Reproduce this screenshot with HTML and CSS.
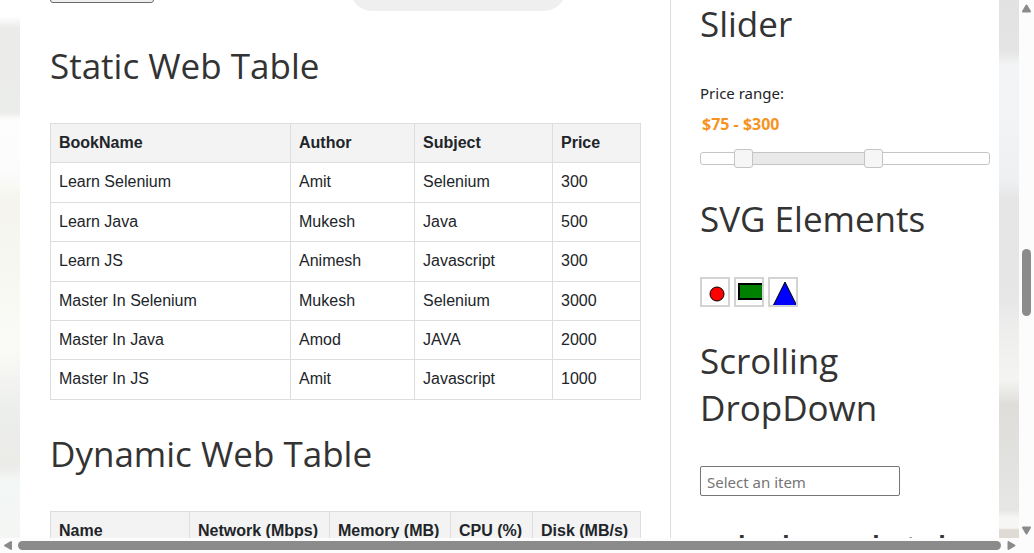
FILE: index.html
```
<!DOCTYPE html>
<html lang="en">
<head>
<meta charset="utf-8">
<title>Web Table</title>
<link rel="stylesheet" href="styles.css">
</head>
<body>
<div class="window">
  <div class="viewport">
    <div class="page">
      <main class="main">
        <div class="buttons"><button class="btn" type="button"></button><button class="pill" type="button"></button></div>
        <h2 class="title">Static Web Table</h2>
        <table class="table">
          <colgroup><col class="book"><col class="author"><col class="subject"><col class="price"></colgroup>
          <tr><th>BookName</th><th>Author</th><th>Subject</th><th>Price</th></tr>
          <tr><td>Learn Selenium</td><td>Amit</td><td>Selenium</td><td>300</td></tr>
          <tr><td>Learn Java</td><td>Mukesh</td><td>Java</td><td>500</td></tr>
          <tr><td>Learn JS</td><td>Animesh</td><td>Javascript</td><td>300</td></tr>
          <tr><td>Master In Selenium</td><td>Mukesh</td><td>Selenium</td><td>3000</td></tr>
          <tr><td>Master In Java</td><td>Amod</td><td>JAVA</td><td>2000</td></tr>
          <tr><td>Master In JS</td><td>Amit</td><td>Javascript</td><td>1000</td></tr>
        </table>
        <h2 class="title">Dynamic Web Table</h2>
        <table class="table">
          <colgroup><col class="name"><col class="network"><col class="memory"><col class="cpu"><col class="disk"></colgroup>
          <tr><th>Name</th><th>Network (Mbps)</th><th>Memory (MB)</th><th>CPU (%)</th><th>Disk (MB/s)</th></tr>
        </table>
      </main>
      <aside class="side">
        <h2 class="title">Slider</h2>
        <label class="range-label" for="amount">Price range:</label>
        <input class="amount" id="amount" type="text" readonly value="$75 - $300">
        <div class="slider">
          <div class="slider-range"></div>
          <input class="slider-input" type="range" min="0" max="500" value="75" aria-labelledby="amount">
          <input class="slider-input" type="range" min="0" max="500" value="300" aria-labelledby="amount">
        </div>
        <h2 class="title">SVG Elements</h2>
        <div class="shapes">
          <svg class="shape" viewBox="0 0 26 26"><circle cx="15" cy="15" r="7" fill="red" stroke="black"/></svg>
          <svg class="shape" viewBox="0 0 26 26"><rect x="3" y="5" width="40" height="15" fill="green" stroke="black" stroke-width="2"/></svg>
          <svg class="shape" viewBox="0 0 26 26"><path d="M15 3 L27 27 H3 Z" fill="blue" stroke="black"/></svg>
        </div>
        <h2 class="title">Scrolling DropDown</h2>
        <input class="combo" type="text" placeholder="Select an item" aria-label="Select an item">
        <h3 class="subtitle">and only an selected</h3>
      </aside>
    </div>
  </div>
  <div class="bar bar-y">
    <svg class="arrow" viewBox="0 0 15 15"><path d="M7.500 5.500 L11 11.500 H4 Z"/></svg>
    <div class="track-y"><div class="thumb-y"></div></div>
    <svg class="arrow" viewBox="0 0 15 15"><path d="M4 4.500 H11 L7.500 10.500 Z"/></svg>
  </div>
  <div class="bar bar-x">
    <svg class="arrow" viewBox="0 0 15 15"><path d="M5 7.500 L11 4 V11 Z"/></svg>
    <div class="thumb-x"></div>
    <svg class="arrow" viewBox="0 0 15 15"><path d="M4.500 4 V11 L10.500 7.500 Z"/></svg>
  </div>
</div>
</body>
</html>
```
FILE: styles.css
```
* { box-sizing: border-box; }
body { margin: 0; color: #212529; font: 15px/24px "Noto Sans", sans-serif; }
.window { display: grid; grid-template: minmax(0, 1fr) 15px / minmax(0, 1fr) 15px; height: 100vh; overflow: hidden; }
.viewport {
  overflow: hidden;
  padding: 0 20px;
  background:
    linear-gradient(#fff 16px, #ebebea 28px, #ebedea 112px, #fdfdfd 120px, #fcfcfd 170px, #f5f5ee 200px, #fafaf7 350px, #eceeeb 410px, #ebebe8 465px, #f3f7f5 480px, #f4f6f4 100%) left / 50% 100% no-repeat,
    linear-gradient(#e2e2e2, #e4e4e4 50px, #f3f4f5 65px, #f2f3f4 120px, #eef0f1 180px, #e5e5e6 200px, #e7e7e7 300px, #eeeeed 330px, #f4f4f2 380px, #deddda 405px, #e6e6e5 510px, #f6f7f5 518px, #f6f7f5 528px, #dfdad4 530px);
}
.page { display: grid; grid-template-columns: minmax(0, 650fr) minmax(0, 329fr); background: #fff; min-height: 100%; }
.main { padding: 0 30px; }
.side { padding: 0 9px 0 29px; border-left: 1px solid #ddd; }
.title { margin: 0 0 34px; font-family: "Open Sans", sans-serif; font-size: 35px; line-height: 47px; font-weight: 400; color: #333; }
.subtitle { margin: 31px 0 20px; font: 700 24px/34px "Open Sans", sans-serif; color: #333; white-space: nowrap; }

.buttons { display: flex; align-items: flex-start; gap: 196px; height: 42px; }
.btn { width: 104px; height: 30px; margin-top: -27px; border: 1px solid #6b6b6b; border-radius: 3px; background: #efefef; }
.pill { width: 216px; height: 44px; margin-top: -33px; border: 0; border-radius: 22px; background: #efefef; }

.table { width: 100%; margin-bottom: 30px; table-layout: fixed; border-collapse: collapse; font: 16px/1.4 "Liberation Sans", Arial, sans-serif; }
.table th, .table td { padding: 8px; border: 1px solid #ddd; text-align: left; white-space: nowrap; }
.table th { background: #f3f3f3; font-weight: 700; }
.book { width: 240px; }
.author { width: 124px; }
.subject { width: 138px; }
.price { width: 88px; }
.name { width: 139px; }
.network { width: 140px; }
.memory { width: 121px; }
.cpu { width: 82px; }
.disk { width: 108px; }

.range-label { display: block; }
.amount { display: block; width: 100%; height: 30px; margin: 4px 0 13px; padding: 0 2px; border: 0; background: none; color: #f6931f; font: 700 16px/30px "Noto Sans", sans-serif; }
.slider { position: relative; height: 13px; margin-bottom: 30px; border: 1px solid #c5c5c5; border-radius: 3px; }
.slider-range { height: 100%; margin: 0 40% 0 15%; background: #e9e9e9; }
.slider-input { position: absolute; top: -5px; left: -10px; width: calc(100% + 20px); height: 21px; margin: 0; appearance: none; background: none; pointer-events: none; }
.slider-input::-webkit-slider-thumb { appearance: none; width: 19px; height: 19px; border: 1px solid #c5c5c5; border-radius: 3px; background: #f6f6f6; pointer-events: auto; }

.shapes { display: flex; gap: 4px; margin: 35px 0 30px; }
.shape { width: 30px; height: 30px; border: 2px solid #d3d3d3; }
.combo { display: block; width: 200px; height: 30px; margin-top: 35px; padding: 4px 6px 2px; border: 1px solid #767676; border-radius: 2px; color: #212529; font: 15px "Noto Sans", sans-serif; }
.combo::placeholder { color: #757575; }

.bar { background: #fcfcfc; }
.bar-y { display: flex; flex-direction: column; }
.bar-x { grid-column: 1 / -1; display: flex; align-items: center; padding-right: 15px; }
.arrow { flex: none; width: 15px; height: 15px; fill: #8b8b8b; stroke: #8b8b8b; stroke-width: 2; stroke-linejoin: round; }
.track-y { flex: 1; padding-left: 3px; }
.thumb-y { width: 9px; height: 67px; margin-top: 234px; border-radius: 5px; background: #8b8b8b; }
.thumb-x { flex: 1; height: 9px; margin: 0 3px; border-radius: 5px; background: #8b8b8b; }
```
